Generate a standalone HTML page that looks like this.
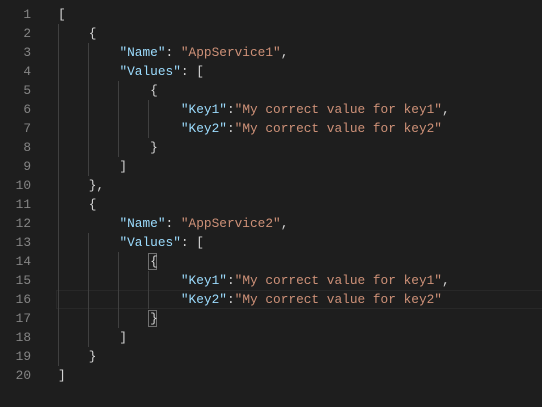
<!DOCTYPE html>
<html><head><style>
body{margin:0;background:#1e1e1e;width:542px;height:407px;overflow:hidden;position:relative;font-family:"Liberation Mono",monospace;font-size:12.8px;}
.ln{position:absolute;left:0;width:31px;text-align:right;color:#858585;}
.c{position:absolute;left:58px;color:#d4d4d4;}
.l{height:19px;line-height:19px;white-space:pre;}
.k{color:#9cdcfe}.s{color:#ce9178}
.g{position:absolute;width:1px;background:#404040;}
.cur{position:absolute;left:56px;right:0;top:290px;height:17px;border:1px solid #282828;border-right:none;}
.bm{position:absolute;height:17px;border:1px solid #707070;box-sizing:border-box;}
</style></head><body>
<div class="cur"></div>
<div class="g" style="left:58px;top:24px;height:342px"></div>
<div class="g" style="left:88px;top:43px;height:133px"></div>
<div class="g" style="left:88px;top:233px;height:114px"></div>
<div class="g" style="left:118px;top:81px;height:76px"></div>
<div class="g" style="left:118px;top:252px;height:76px"></div>
<div class="g" style="left:148px;top:100px;height:38px"></div>
<div class="g" style="left:148px;top:271px;height:38px"></div>
<div class="bm" style="left:148px;top:253px;width:9px"></div>
<div class="bm" style="left:148px;top:310px;width:9px"></div>
<div class="ln" style="top:5px">
<div class="l">1</div><div class="l">2</div><div class="l">3</div><div class="l">4</div><div class="l">5</div><div class="l">6</div><div class="l">7</div><div class="l">8</div><div class="l">9</div><div class="l">10</div><div class="l">11</div><div class="l">12</div><div class="l">13</div><div class="l">14</div><div class="l">15</div><div class="l">16</div><div class="l">17</div><div class="l">18</div><div class="l">19</div><div class="l">20</div>
</div>
<div class="c" style="top:5px">
<div class="l">[</div>
<div class="l">    {</div>
<div class="l">        <span class="k">"Name"</span>: <span class="s">"AppService1"</span>,</div>
<div class="l">        <span class="k">"Values"</span>: [</div>
<div class="l">            {</div>
<div class="l">                <span class="k">"Key1"</span>:<span class="s">"My correct value for key1"</span>,</div>
<div class="l">                <span class="k">"Key2"</span>:<span class="s">"My correct value for key2"</span></div>
<div class="l">            }</div>
<div class="l">        ]</div>
<div class="l">    },</div>
<div class="l">    {</div>
<div class="l">        <span class="k">"Name"</span>: <span class="s">"AppService2"</span>,</div>
<div class="l">        <span class="k">"Values"</span>: [</div>
<div class="l">            {</div>
<div class="l">                <span class="k">"Key1"</span>:<span class="s">"My correct value for key1"</span>,</div>
<div class="l">                <span class="k">"Key2"</span>:<span class="s">"My correct value for key2"</span></div>
<div class="l">            }</div>
<div class="l">        ]</div>
<div class="l">    }</div>
<div class="l">]</div>
</div>
</body></html>
